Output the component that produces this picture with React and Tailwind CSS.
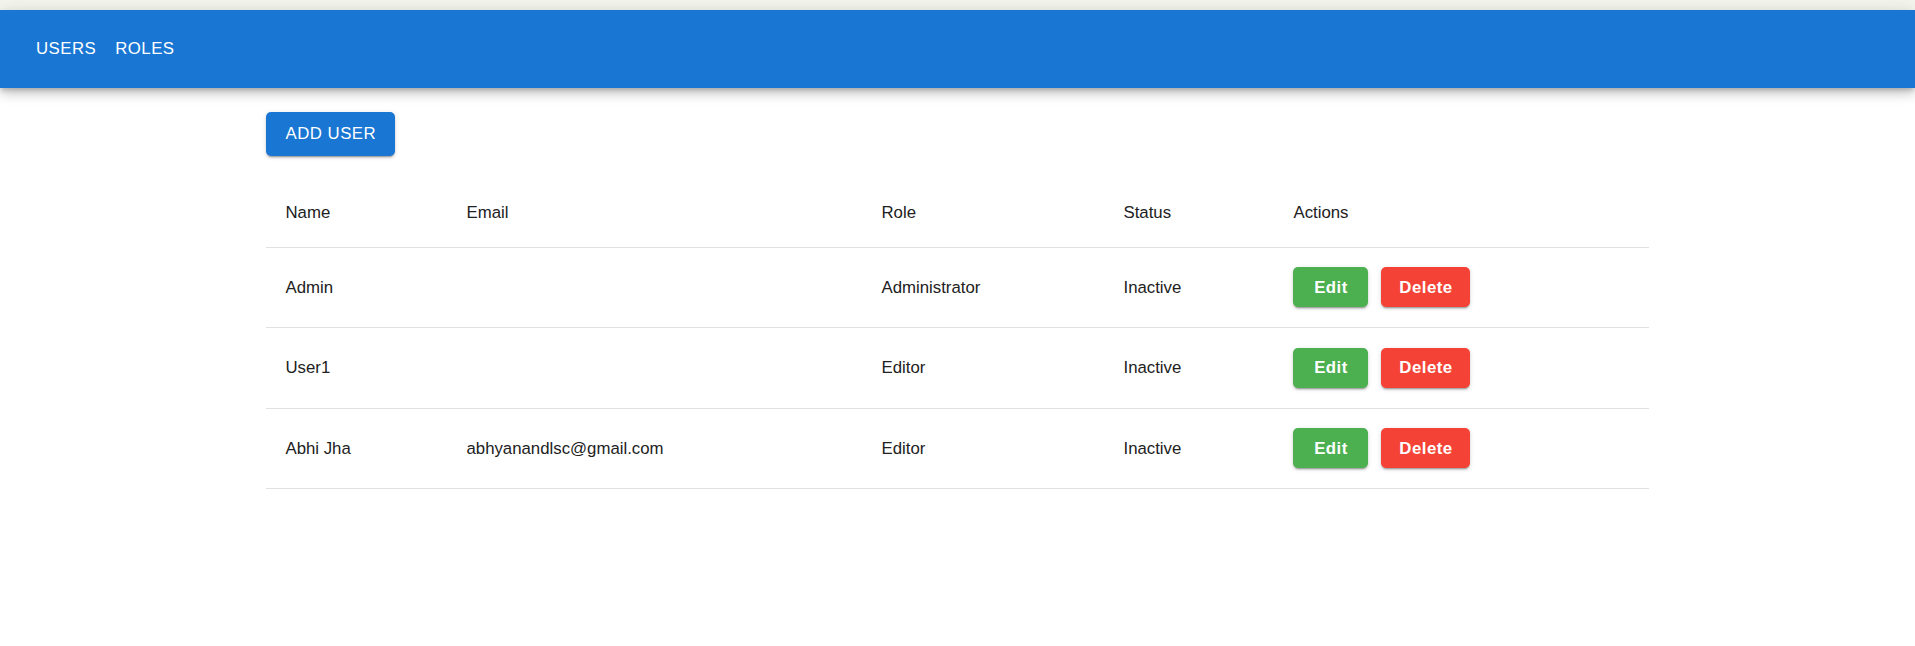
import React from "react";

const users = [
  { name: "Admin", email: "", role: "Administrator", status: "Inactive" },
  { name: "User1", email: "", role: "Editor", status: "Inactive" },
  { name: "Abhi Jha", email: "abhyanandlsc@gmail.com", role: "Editor", status: "Inactive" },
];

const App = () => {
  return (
    <div className="min-h-[646px] bg-white text-[#212121] font-['Liberation_Sans',Arial,sans-serif]">
      {/* thin strip above the bar */}
      <div className="h-[10px] bg-[#f5f7ee]" />

      {/* App bar */}
      <header className="h-[78px] bg-[#1976d2] flex items-center pl-[36px] gap-[19px] shadow-[0_3px_5px_-1px_rgba(0,0,0,0.2),0_6px_10px_0_rgba(0,0,0,0.14),0_1px_18px_0_rgba(0,0,0,0.12)] relative z-10">
        <span className="text-white text-[16.8px] tracking-[0.48px] leading-none">USERS</span>
        <span className="text-white text-[16.8px] tracking-[0.48px] leading-none">ROLES</span>
      </header>

      {/* Content */}
      <main className="max-w-[1440px] mx-auto px-[28.8px] pt-[24px]">
        <button className="h-[44px] w-[129px] rounded-[5px] bg-[#1976d2] text-white text-[16.8px] tracking-[0.48px] shadow-[0_3px_1px_-2px_rgba(0,0,0,0.2),0_2px_2px_0_rgba(0,0,0,0.14),0_1px_5px_0_rgba(0,0,0,0.12)]">
          ADD USER
        </button>

        <table className="w-full mt-[22px] border-collapse text-[16.8px]">
          <colgroup>
            <col className="w-[181px]" />
            <col className="w-[415px]" />
            <col className="w-[242px]" />
            <col className="w-[170px]" />
            <col />
          </colgroup>
          <thead>
            <tr className="border-b border-[#e0e0e0]">
              {["Name", "Email", "Role", "Status", "Actions"].map((h) => (
                <th key={h} className="h-[69px] px-[19.2px] text-left font-normal align-middle">
                  {h}
                </th>
              ))}
            </tr>
          </thead>
          <tbody>
            {users.map((u) => (
              <tr key={u.name} className="border-b border-[#e0e0e0]">
                <td className="h-[80.5px] px-[19.2px] align-middle">{u.name}</td>
                <td className="px-[19.2px] align-middle">{u.email}</td>
                <td className="px-[19.2px] align-middle">{u.role}</td>
                <td className="px-[19.2px] align-middle">{u.status}</td>
                <td className="px-[19.2px] align-middle">
                  <div className="flex gap-[13px]">
                    <button className="h-[40px] w-[75px] rounded-[5px] bg-[#4caf50] text-white font-bold tracking-[0.48px] shadow-[0_3px_1px_-2px_rgba(0,0,0,0.2),0_2px_2px_0_rgba(0,0,0,0.14),0_1px_5px_0_rgba(0,0,0,0.12)]">
                      Edit
                    </button>
                    <button className="h-[40px] w-[89px] rounded-[5px] bg-[#f44336] text-white font-bold tracking-[0.48px] shadow-[0_3px_1px_-2px_rgba(0,0,0,0.2),0_2px_2px_0_rgba(0,0,0,0.14),0_1px_5px_0_rgba(0,0,0,0.12)]">
                      Delete
                    </button>
                  </div>
                </td>
              </tr>
            ))}
          </tbody>
        </table>
      </main>
    </div>
  );
};

export default App;
